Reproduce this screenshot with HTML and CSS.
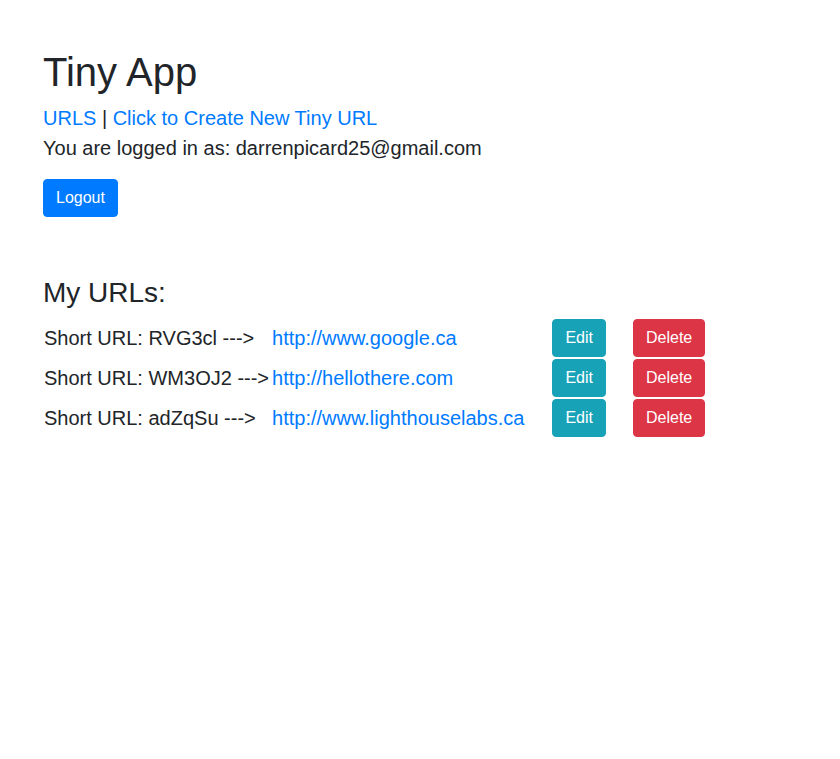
FILE: index.html
```html
<!DOCTYPE html>
<html>
<head>
<meta charset="utf-8">
<title>Tiny App</title>
<link rel="stylesheet" href="styles.css">
</head>
<body>
<main class="page">
  <h1 class="title">Tiny App</h1>
  <p class="info">
    <a href="#" class="link">URLS</a> | <a href="#" class="link">Click to Create New Tiny URL</a><br>
    You are logged in as: darrenpicard25@gmail.com
  </p>
  <button class="btn btn-primary">Logout</button>

  <h3 class="section-title">My URLs:</h3>
  <div class="url-grid">
    <span class="short">Short URL: RVG3cl ---&gt;</span>
    <a href="#" class="link">http://www.google.ca</a>
    <button class="btn btn-info">Edit</button>
    <button class="btn btn-danger">Delete</button>

    <span class="short">Short URL: WM3OJ2 ---&gt;</span>
    <a href="#" class="link">http://hellothere.com</a>
    <button class="btn btn-info">Edit</button>
    <button class="btn btn-danger">Delete</button>

    <span class="short">Short URL: adZqSu ---&gt;</span>
    <a href="#" class="link">http://www.lighthouselabs.ca</a>
    <button class="btn btn-info">Edit</button>
    <button class="btn btn-danger">Delete</button>
  </div>
</main>
</body>
</html>
```

FILE: styles.css
```css
* { box-sizing: border-box; }
html, body { margin: 0; padding: 0; background: #fff; }
body {
  font-family: "Liberation Sans", Arial, sans-serif;
  font-size: 20px;
  line-height: 1.5;
  color: #212529;
}
.page {
  padding: 48px 43px 0 43px;
}
.title {
  font-size: 40px;
  font-weight: 500;
  line-height: 1.2;
  margin: 0 0 7px 0;
}
.info {
  margin: 0 0 16px 0;
}
.link {
  color: #007bff;
  text-decoration: none;
}
.btn {
  display: inline-block;
  font-family: "Liberation Sans", Arial, sans-serif;
  font-size: 16px;
  line-height: 1.5;
  padding: 6px 12px;
  border: 1px solid transparent;
  border-radius: 4px;
  color: #fff;
  cursor: pointer;
  height: 38px;
  white-space: nowrap;
}
.btn-primary { background: #007bff; border-color: #007bff; }
.btn-info { background: #17a2b8; border-color: #17a2b8; }
.btn-danger { background: #dc3545; border-color: #dc3545; }
.section-title {
  font-size: 28px;
  font-weight: 500;
  line-height: 1.2;
  margin: 59px 0 9px 0;
}
.url-grid {
  display: grid;
  grid-template-columns: auto auto auto auto;
  justify-content: start;
  align-items: center;
  row-gap: 2px;
  margin-left: 1px;
}
.url-grid .short { margin-right: 3px; white-space: nowrap; }
.url-grid .link { margin-right: 28px; white-space: nowrap; }
.url-grid .btn-info { margin-right: 27px; }
```
